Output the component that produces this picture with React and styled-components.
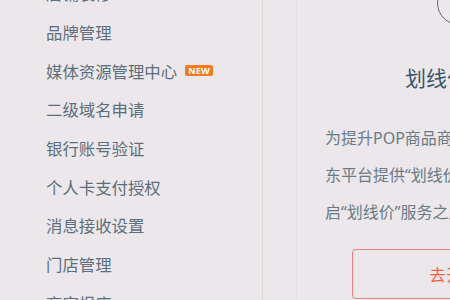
import styled, { createGlobalStyle } from 'styled-components'

const GlobalStyle = createGlobalStyle`
  html, body {
    margin: 0;
    padding: 0;
    background: #ebe6e9;
    overflow: hidden;
  }
  body {
    font-family: "Noto Sans", "Noto Sans CJK SC", sans-serif;
  }
`;

const Page = styled.div`
  display: flex;
  width: 450px;
  height: 300px;
  overflow: hidden;
  background: #ebe6e9;
`;

const Sidebar = styled.div`
  width: 262px;
  flex-shrink: 0;
  background: #ece7ea;
  border-right: 1px solid #e0dadd;
`;

const MenuList = styled.ul`
  list-style: none;
  margin: -26px 0 0;
  padding: 0 0 0 46px;
`;

const MenuItem = styled.li`
  display: flex;
  align-items: center;
  height: 38.7px;
  font-size: 16.4px;
  color: #5d6f7c;
  white-space: nowrap;
`;

const NewBadge = styled.span`
  margin-left: 8px;
  padding: 0 3px;
  height: 11px;
  line-height: 11px;
  font-size: 9px;
  font-weight: 700;
  color: #fff;
  background: #f27b22;
  border-radius: 2px;
  letter-spacing: 0.3px;
`;

const Gap = styled.div`
  width: 33px;
  flex-shrink: 0;
`;

const Card = styled.div`
  flex: 1;
  position: relative;
  border-left: 1px solid #e4dfe2;
  background: #ece7ea;
  padding: 0 0 0 28px;
  overflow: hidden;
`;

const IconCircle = styled.div`
  position: absolute;
  left: 140px;
  top: -19px;
  width: 42px;
  height: 42px;
  border: 1.6px solid #5b6f7b;
  border-radius: 50%;
`;

const Title = styled.h2`
  margin: 66px 0 0 80px;
  font-size: 21px;
  font-weight: 400;
  line-height: 24px;
  color: #36566a;
  white-space: nowrap;
`;

const Desc = styled.div`
  margin-top: 30px;
  font-size: 16px;
  line-height: 37px;
  color: #6b7b86;
  white-space: nowrap;
`;

const Line = styled.div``;

const OpenButton = styled.button`
  display: flex;
  align-items: center;
  justify-content: center;
  margin: 18px 0 0 27px;
  width: 206px;
  height: 50px;
  border: 1.5px solid #ef7e84;
  border-radius: 4px;
  background: transparent;
  font-family: inherit;
  font-size: 16px;
  color: #f0603e;
  letter-spacing: 1px;
`;

const menu = [
  { label: '店铺装修' },
  { label: '品牌管理' },
  { label: '媒体资源管理中心', isNew: true },
  { label: '二级域名申请' },
  { label: '银行账号验证' },
  { label: '个人卡支付授权' },
  { label: '消息接收设置' },
  { label: '门店管理' },
  { label: '商家报店' },
];

export default function App() {
  return (
    <>
      <GlobalStyle />
      <Page>
        <Sidebar>
          <MenuList>
            {menu.map((m) => (
              <MenuItem key={m.label}>
                {m.label}
                {m.isNew && <NewBadge>NEW</NewBadge>}
              </MenuItem>
            ))}
          </MenuList>
        </Sidebar>
        <Gap />
        <Card>
          <IconCircle />
          <Title>划线价服务</Title>
          <Desc>
            <Line>为提升POP商品商家的价格竞争力，京</Line>
            <Line>东平台提供“划线价”服务，商家开</Line>
            <Line>启“划线价”服务之后，商品页将展示</Line>
          </Desc>
          <OpenButton>去开通</OpenButton>
        </Card>
      </Page>
    </>
  )
}
